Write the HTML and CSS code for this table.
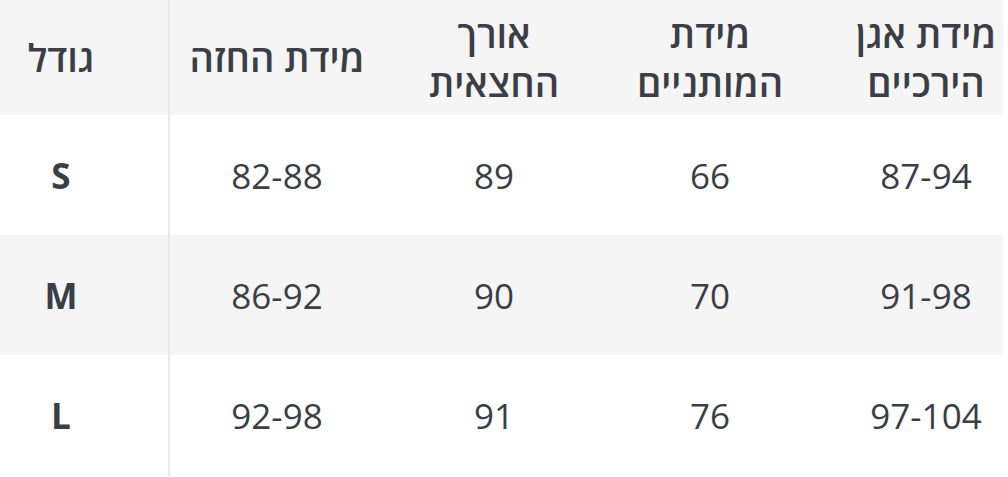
FILE: index.html
```html
<!DOCTYPE html>
<html lang="he">
<head>
<meta charset="utf-8">
<link rel="stylesheet" href="styles.css">
</head>
<body>
<div class="table">
  <div class="row head">
    <div class="cell c1" dir="rtl">גודל</div>
    <div class="cell c2" dir="rtl">מידת החזה</div>
    <div class="cell c3" dir="rtl">אורך<br>החצאית</div>
    <div class="cell c4" dir="rtl">מידת<br>המותניים</div>
    <div class="cell c5" dir="rtl">מידת אגן<br>הירכיים</div>
  </div>
  <div class="row">
    <div class="cell c1 size">S</div>
    <div class="cell c2">82-88</div>
    <div class="cell c3">89</div>
    <div class="cell c4">66</div>
    <div class="cell c5">87-94</div>
  </div>
  <div class="row alt">
    <div class="cell c1 size">M</div>
    <div class="cell c2">86-92</div>
    <div class="cell c3">90</div>
    <div class="cell c4">70</div>
    <div class="cell c5">91-98</div>
  </div>
  <div class="row">
    <div class="cell c1 size">L</div>
    <div class="cell c2">92-98</div>
    <div class="cell c3">91</div>
    <div class="cell c4">76</div>
    <div class="cell c5">97-104</div>
  </div>
</div>
</body>
</html>
```
FILE: styles.css
```css
html, body {
  margin: 0;
  padding: 0;
  background: #ffffff;
}
body {
  font-family: "Open Sans", "DejaVu Sans", sans-serif;
  color: #3b3e47;
  overflow: hidden;
}
.table {
  width: 1003px;
  display: flex;
  flex-direction: column;
}
.row {
  display: grid;
  grid-template-columns: 170px 216px 216px 216px 185px;
  height: 120px;
}
.row.head {
  height: 115px;
  background: #f5f5f5;
}
.row.alt {
  background: #f5f5f5;
}
.row:last-child {
  height: 121px;
}
.cell {
  display: flex;
  align-items: center;
  justify-content: center;
  text-align: center;
  font-size: 35px;
  line-height: 49px;
}
.head .cell {
  font-weight: 600;
  font-size: 38px;
  line-height: 49px;
}
.c1 {
  padding-right: 46px;
  border-right: 2px solid #e8e8e8;
}
.c2 {
  margin-left: -2px;
}
.c5 {
  padding-left: 31px;
}
.size {
  font-weight: 700;
}
```
